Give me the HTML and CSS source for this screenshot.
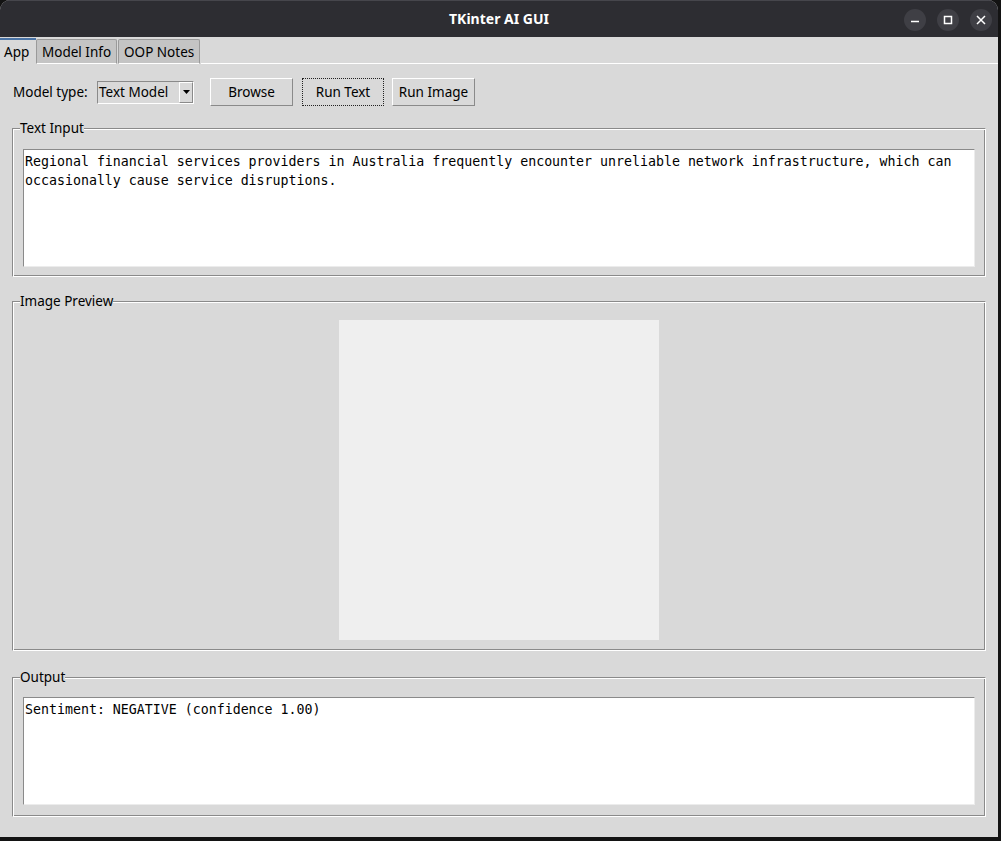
FILE: index.html
```html
<!DOCTYPE html>
<html lang="en">
<head>
<meta charset="utf-8">
<title>TKinter AI GUI</title>
<link rel="stylesheet" href="styles.css">
</head>
<body>
<div class="window">
  <header class="titlebar">
    <div class="tb-spacer"></div>
    <div class="title">TKinter AI GUI</div>
    <div class="controls">
      <span class="ctl"><svg width="22" height="22" viewBox="0 0 22 22"><line x1="7" y1="12.5" x2="15" y2="12.5" stroke="#fff" stroke-width="1.5"/></svg></span>
      <span class="ctl"><svg width="22" height="22" viewBox="0 0 22 22"><rect x="7.5" y="7.5" width="7" height="7" fill="none" stroke="#fff" stroke-width="1.5"/></svg></span>
      <span class="ctl"><svg width="22" height="22" viewBox="0 0 22 22"><path d="M7 7 L15 15 M15 7 L7 15" stroke="#fff" stroke-width="1.5" fill="none"/></svg></span>
    </div>
  </header>
  <nav class="tabs">
    <div class="tab active">App</div>
    <div class="tab">Model Info</div>
    <div class="tab">OOP Notes</div>
    <div class="tab-fill"></div>
  </nav>
  <main class="content">
    <div class="toolbar">
      <span class="lbl">Model type:</span>
      <div class="combo">
        <span class="combo-text">Text Model</span>
        <span class="combo-btn"><svg width="9" height="6" viewBox="0 0 9 6"><path d="M1 1 L8 1 L4.5 5 Z" fill="#000"/></svg></span>
      </div>
      <button class="btn b-browse">Browse</button>
      <button class="btn b-run focus">Run Text</button>
      <button class="btn b-img">Run Image</button>
    </div>
    <fieldset class="group g-text">
      <legend>Text Input</legend>
      <div class="textbox tb-input">Regional financial services providers in Australia frequently encounter unreliable network infrastructure, which can occasionally cause service disruptions.</div>
    </fieldset>
    <fieldset class="group g-image">
      <legend>Image Preview</legend>
      <div class="preview"></div>
    </fieldset>
    <fieldset class="group g-output">
      <legend>Output</legend>
      <div class="textbox tb-output">Sentiment: NEGATIVE (confidence 1.00)</div>
    </fieldset>
  </main>
</div>
</body>
</html>
```
FILE: styles.css
```css
* { box-sizing: border-box; }
html, body { margin: 0; height: 100%; }
body {
  background: #131313;
  font-family: "Noto Sans", "DejaVu Sans", sans-serif;
  overflow: hidden;
}
.window {
  width: 998px;
  height: 837px;
  background: #d9d9d9;
  border-radius: 10px 10px 0 0;
  overflow: hidden;
  display: flex;
  flex-direction: column;
}
.titlebar {
  height: 37px;
  flex: none;
  background: #2d2d32;
  border-top: 1px solid #46464c;
  display: grid;
  grid-template-columns: 1fr auto 1fr;
  align-items: center;
  color: #fff;
}
.title {
  font-weight: 700;
  font-size: 14px;
  margin-top: -2px;
}
.controls {
  justify-self: end;
  display: flex;
  gap: 11px;
  padding-right: 6px;
  margin-top: 1px;
}
.ctl {
  width: 22px;
  height: 22px;
  border-radius: 50%;
  background: #3f3f45;
  display: flex;
}
.tabs {
  height: 27px;
  flex: none;
  display: flex;
  align-items: flex-end;
  font-size: 13.5px;
  color: #000;
}
.tab {
  height: 25px;
  padding: 0 5px;
  display: flex;
  align-items: center;
  background: #c4c4c4;
  border: 1px solid #9a9a9a;
  border-bottom: 1px solid #fff;
  border-radius: 2px 2px 0 0;
  margin-right: 1px;
}
.tab.active {
  height: 26px;
  width: 36px;
  padding: 0 0 0 4px;
  background: #d9d9d9;
  border: none;
  border-top: 2px solid #4b74a6;
  border-radius: 0;
  margin-right: 0;
}
.tab-fill {
  flex: 1;
  height: 1px;
  background: #fff;
}
.content {
  flex: 1;
  padding: 14px 12px 0 12px;
  display: flex;
  flex-direction: column;
}
.toolbar {
  height: 28px;
  display: flex;
  align-items: center;
  font-size: 13.5px;
}
.lbl {
  width: 85px;
  padding-left: 1px;
  color: #000;
}
.combo {
  width: 97px;
  height: 23px;
  display: flex;
  align-items: stretch;
  border: 1px solid;
  border-color: #8a8a8a #fff #fff #8a8a8a;
  background: #d9d9d9;
  margin-right: 16px;
}
.combo-text {
  flex: 1;
  padding-left: 1px;
  display: flex;
  align-items: center;
  color: #000;
  white-space: nowrap;
}
.combo-btn {
  width: 14px;
  flex: none;
  border: 1px solid;
  border-color: #fff #8a8a8a #8a8a8a #fff;
  display: flex;
  align-items: center;
  justify-content: center;
}
.btn {
  height: 28px;
  margin: 0;
  padding: 0;
  font-family: inherit;
  font-size: 13.5px;
  color: #000;
  background: #d9d9d9;
  border: 1px solid;
  border-color: #fff #8a8a8a #8a8a8a #fff;
  border-radius: 0;
}
.b-browse { width: 83px; }
.b-run { width: 82px; margin-left: 9px; }
.b-img { width: 83px; margin-left: 8px; }
.btn.focus { border: 1px dotted #222; }
.group {
  margin: 0;
  min-width: 0;
  padding: 13px 10px 9px;
  border: 1px solid;
  border-color: #8a8a8a #fff #fff #8a8a8a;
  box-shadow: inset 1px 1px 0 #fff, inset -1px -1px 0 #8a8a8a;
}
.group legend {
  padding: 0;
  margin-left: -3px;
  font-size: 13.5px;
  line-height: 15px;
  color: #000;
  background: #d9d9d9;
}
.g-text { margin-top: 15px; }
.g-image { margin-top: 17px; padding-top: 11px; padding-bottom: 10px; }
.g-output { margin-top: 19px; padding-top: 12px; padding-bottom: 11px; }
.textbox {
  background: #fff;
  border: 1px solid;
  border-color: #8a8a8a #ececec #ececec #8a8a8a;
  font-family: "DejaVu Sans Mono", monospace;
  font-size: 13.28px;
  line-height: 19px;
  padding: 2px 1px;
  white-space: pre-wrap;
  color: #000;
}
.tb-input { height: 118px; }
.tb-output { height: 108px; }
.preview {
  width: 320px;
  height: 320px;
  margin: 0 auto;
  background: #efefef;
}
```
